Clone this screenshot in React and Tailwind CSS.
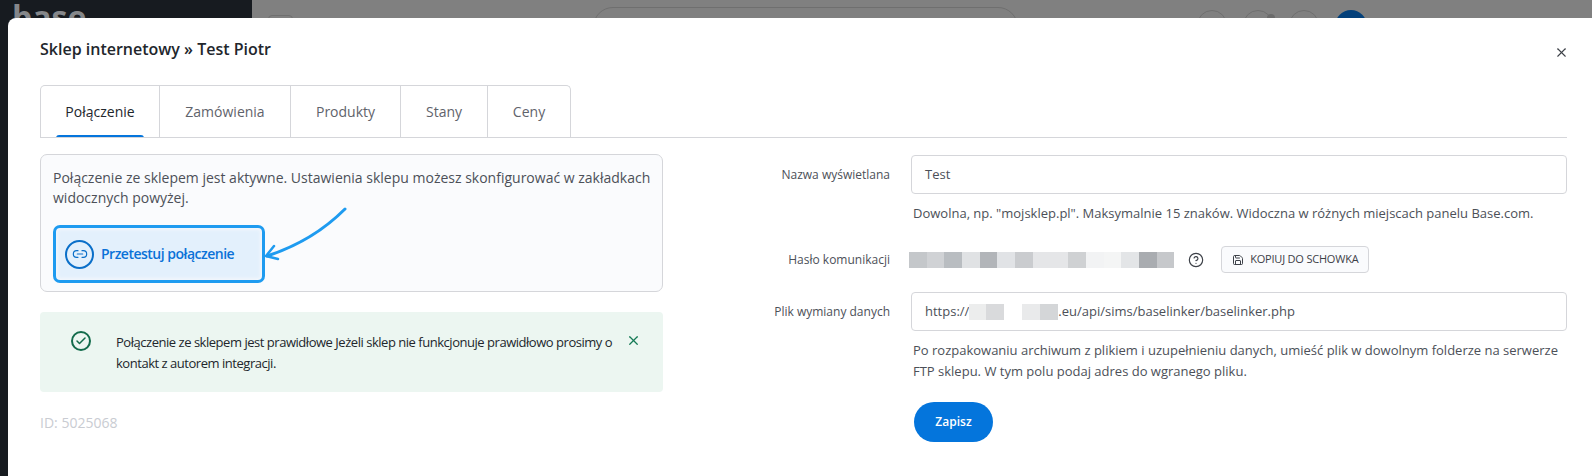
import React from 'react';
import { Check, HelpCircle, Link2, Save, X } from 'lucide-react';

const blurBlocks = [
    'bg-[#c4c7ca]', 'bg-[#d0d2d5]', 'bg-[#b9bdc1]', 'bg-[#e0e2e4]', 'bg-[#b2b5b9]',
    'bg-[#e1e3e6]', 'bg-[#cacccf]', 'bg-[#e5e6e8]', 'bg-[#e5e6e8]', 'bg-[#cfd1d3]',
    'bg-[#f2f3f4]', 'bg-[#f4f5f5]', 'bg-[#e3e5e7]', 'bg-[#a9acb0]', 'bg-[#c6c8cb]',
];

const tabs = [
    { label: 'Połączenie', width: 'w-[119px]', active: true },
    { label: 'Zamówienia', width: 'w-[131px]' },
    { label: 'Produkty', width: 'w-[110px]' },
    { label: 'Stany', width: 'w-[87px]' },
    { label: 'Ceny', width: 'w-[82px]' },
];

function PageBehind() {
    return (
        <div className="flex h-[476px] w-full overflow-hidden">
            <div className="w-[252px] shrink-0 bg-[#171b20] pt-[2px] pl-[12px] text-[32px] leading-[30px] font-bold text-[#85878a]">base</div>
            <div className="flex h-full flex-1 items-start bg-[#808080] pt-[7px]">
                <div className="mt-[8px] ml-[16px] h-[12px] w-[25px] rounded-[4px] border border-[#6f6f6f]" />
                <div className="ml-[300px] h-10 w-[425px] rounded-[20px] border border-[#6f6f6f]" />
                <div className="mt-[3px] ml-[179px] flex gap-[16px]">
                    <div className="h-[30px] w-[30px] rounded-full border border-[#6f6f6f]" />
                    <div className="relative h-[30px] w-[30px] rounded-full border border-[#6f6f6f]">
                        <span className="absolute top-[3px] right-[-3px] h-[12px] w-[8px] rounded-full bg-[#6b6b6b]" />
                    </div>
                    <div className="h-[30px] w-[30px] rounded-full border border-[#6f6f6f]" />
                    <div className="h-[32px] w-[32px] rounded-full bg-[#03407a]" />
                </div>
            </div>
        </div>
    );
}

function Tabs() {
    return (
        <div className="flex h-[53px] border-b border-[#d5d6da]">
            <div className="flex overflow-hidden rounded-t-[5px] border-x border-t border-[#d5d6da]">
                {tabs.map((tab) => (
                    <div
                        key={tab.label}
                        className={`relative flex items-center justify-center border-r border-[#d5d6da] text-[14px] last:border-r-0 ${tab.width} ${tab.active ? 'text-[#22262c]' : 'text-[#5f636b]'}`}
                    >
                        {tab.label}
                        {tab.active && <span className="absolute bottom-[-1px] left-[15px] h-[3px] w-[88px] rounded-t-[3px] bg-[#0475dc]" />}
                    </div>
                ))}
            </div>
        </div>
    );
}

function ConnectionPanel() {
    return (
        <div className="w-[623px] shrink-0">
            <div className="relative h-[138px] rounded-[7px] border border-[#d5d6da] bg-[#fafbfd] pt-[13px] pl-[12px] text-[14px] leading-[20px] text-[#4c5058]">
                <p className="w-[600px]">Połączenie ze sklepem jest aktywne. Ustawienia sklepu możesz skonfigurować w zakładkach widocznych powyżej.</p>
                <div className="mt-[17px] flex h-[58px] w-[212px] items-center gap-[7px] rounded-[7px] border-[3px] border-[#1e9bf0] bg-[#e3f0fc] pl-[9px] shadow-[inset_0_0_3px_2px_#f2f6fc]">
                    <span className="flex h-[29px] w-[29px] items-center justify-center rounded-full border-2 border-[#0a6fc9] text-[#0a6fc9]">
                        <Link2 size={16} strokeWidth={1.75} />
                    </span>
                    <span className="text-[14px] font-semibold tracking-[-0.5px] text-[#0a72d8]">Przetestuj połączenie</span>
                </div>
                {/* annotation arrow drawn over the card */}
                <svg className="absolute top-[50px] left-[222px] text-[#1e9bf0]" width="90" height="56" viewBox="0 0 90 56" fill="none" stroke="currentColor" strokeWidth="3" strokeLinecap="round" strokeLinejoin="round">
                    <path d="M82 4C62 24 38 40 4 51" />
                    <path d="M11 41L3 51L15 54" strokeWidth="2.5" />
                </svg>
            </div>

            <div className="mt-[20px] flex h-[80px] items-start rounded-[4px] bg-[#ecf6f1] pt-[19px] text-[13px] leading-[21px] text-[#22262c]">
                <span className="ml-[31px] flex h-[20px] w-[20px] shrink-0 items-center justify-center rounded-full border-2 border-[#126b4b] text-[#126b4b]">
                    <Check size={12} strokeWidth={3} />
                </span>
                <p className="mt-[1px] ml-[25px] w-[500px] tracking-[-0.47px]">Połączenie ze sklepem jest prawidłowe Jeżeli sklep nie funkcjonuje prawidłowo prosimy o kontakt z autorem integracji.</p>
                <X className="mt-[2px] ml-[10px] text-[#157a55]" size={15} strokeWidth={2} />
            </div>

            <div className="mt-[21px] text-[14px] leading-[20px] text-[#c9ccd2]">ID: 5025068</div>
        </div>
    );
}

function FieldLabel({ children }) {
    return <div className="w-[131px] shrink-0 text-right text-[12px] text-[#4c5058]">{children}</div>;
}

function SettingsForm() {
    return (
        <div className="mt-[1px] ml-[96px] flex-1">
            <div className="flex items-center">
                <FieldLabel>Nazwa wyświetlana</FieldLabel>
                <div className="ml-[21px] flex h-[39px] flex-1 items-center rounded-[4px] border border-[#d5d6da] pl-[13px] text-[13px] text-[#4c5058]">Test</div>
            </div>
            <p className="mt-[9px] ml-[154px] text-[13px] leading-[20px] text-[#4c5058]">Dowolna, np. "mojsklep.pl". Maksymalnie 15 znaków. Widoczna w różnych miejscach panelu Base.com.</p>

            <div className="mt-[23px] flex h-[27px] items-center">
                <FieldLabel>Hasło komunikacji</FieldLabel>
                <div className="ml-[19px] flex h-[16px]">
                    {blurBlocks.map((color, i) => (
                        <div key={i} className={`h-full w-[17.7px] ${color}`} />
                    ))}
                </div>
                <HelpCircle className="ml-[14px] text-[#3d4148]" size={16} strokeWidth={1.75} />
                <button className="ml-[17px] flex h-[27px] w-[148px] items-center justify-center gap-[6px] rounded-[4px] border border-[#d5d6da] bg-[#fafbfd] text-[11px] font-medium tracking-[-0.2px] text-[#3d4148]">
                    <Save size={12} strokeWidth={2} />
                    KOPIUJ DO SCHOWKA
                </button>
            </div>

            <div className="mt-[19px] flex items-center">
                <FieldLabel>Plik wymiany danych</FieldLabel>
                <div className="ml-[21px] flex h-[39px] flex-1 items-center rounded-[4px] border border-[#d5d6da] pl-[13px] text-[13px] text-[#4c5058]">
                    https://
                    <span className="h-[16px] w-[17px] bg-[#eceded]" />
                    <span className="h-[16px] w-[18px] bg-[#d9dadc]" />
                    <span className="ml-[18px] h-[16px] w-[18px] bg-[#e9eaeb]" />
                    <span className="h-[16px] w-[18px] bg-[#d4d6d8]" />
                    .eu/api/sims/baselinker/baselinker.php
                </div>
            </div>
            <p className="mt-[9px] ml-[154px] text-[13px] leading-[21px] text-[#4c5058]">Po rozpakowaniu archiwum z plikiem i uzupełnieniu danych, umieść plik w dowolnym folderze na serwerze FTP sklepu. W tym polu podaj adres do wgranego pliku.</p>

            <button className="mt-[20px] ml-[155px] h-[40px] w-[79px] rounded-[20px] bg-[#0475dc] text-[12px] font-semibold text-white">Zapisz</button>
        </div>
    );
}

export default function App() {
    return (
        <div className="relative h-[476px] w-[1592px] overflow-hidden font-['Open_Sans',sans-serif]">
            <PageBehind />
            <div className="absolute top-[18px] left-[8px] h-[470px] w-[1584px] rounded-tl-[8px] bg-white pt-[19px] pr-[25px] pl-[32px]">
                <div className="flex items-center justify-between">
                    <h1 className="text-[16px] leading-[22px] font-semibold text-[#22262c]">Sklep internetowy » Test Piotr</h1>
                    <X className="mt-[8px] mr-[-2px] text-[#3d4148]" size={15} strokeWidth={1.75} />
                </div>
                <div className="mt-[25px]">
                    <Tabs />
                    <div className="mt-[16px] flex">
                        <ConnectionPanel />
                        <SettingsForm />
                    </div>
                </div>
            </div>
        </div>
    );
}
